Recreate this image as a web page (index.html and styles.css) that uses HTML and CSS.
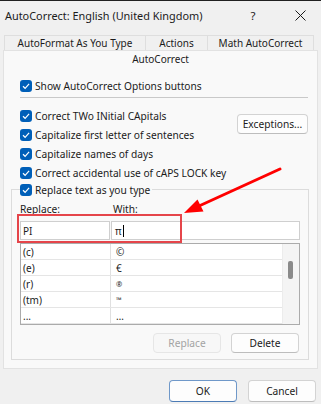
FILE: index.html
```html
<!DOCTYPE html>
<html>
<head>
<meta charset="utf-8">
<title>AutoCorrect</title>
<link rel="stylesheet" href="styles.css">
</head>
<body>
<div class="window">
  <div class="titlebar">
    <span class="title">AutoCorrect: English (United Kingdom)</span>
    <span class="help">?</span>
    <span class="close"><svg width="11" height="11" viewBox="0 0 11 11"><path d="M0.5 0.5L10.5 10.5M10.5 0.5L0.5 10.5" stroke="#1a1a1a" stroke-width="1" fill="none"/></svg></span>
  </div>
  <div class="tabs">
    <div class="tab t1">AutoFormat As You Type</div>
    <div class="tab t2">Actions</div>
    <div class="tab t3">Math AutoCorrect</div>
  </div>
  <div class="panel">
    <div class="panel-title">AutoCorrect</div>
    <div class="check show"><span class="box"><svg width="12" height="12" viewBox="0 0 12 12"><path d="M3 6.3L5.1 8.3L9.1 3.9" stroke="#fff" stroke-width="1.2" fill="none"/></svg></span>Show AutoCorrect Options buttons</div>
    <div class="sep"></div>
    <div class="opts">
      <div class="opt-list">
        <div class="check"><span class="box"><svg width="12" height="12" viewBox="0 0 12 12"><path d="M3 6.3L5.1 8.3L9.1 3.9" stroke="#fff" stroke-width="1.2" fill="none"/></svg></span>Correct TWo INitial CApitals</div>
        <div class="check"><span class="box"><svg width="12" height="12" viewBox="0 0 12 12"><path d="M3 6.3L5.1 8.3L9.1 3.9" stroke="#fff" stroke-width="1.2" fill="none"/></svg></span>Capitalize first letter of sentences</div>
        <div class="check"><span class="box"><svg width="12" height="12" viewBox="0 0 12 12"><path d="M3 6.3L5.1 8.3L9.1 3.9" stroke="#fff" stroke-width="1.2" fill="none"/></svg></span>Capitalize names of days</div>
        <div class="check"><span class="box"><svg width="12" height="12" viewBox="0 0 12 12"><path d="M3 6.3L5.1 8.3L9.1 3.9" stroke="#fff" stroke-width="1.2" fill="none"/></svg></span>Correct accidental use of cAPS LOCK key</div>
      </div>
      <div class="btn exceptions">Exceptions...</div>
    </div>
    <fieldset class="group">
      <legend class="legend"><div class="check leg"><span class="box"><svg width="12" height="12" viewBox="0 0 12 12"><path d="M3 6.3L5.1 8.3L9.1 3.9" stroke="#fff" stroke-width="1.2" fill="none"/></svg></span>Replace text as you type</div></legend>
      <div class="labels"><span class="lab-replace">Replace:</span><span>With:</span></div>
      <div class="inputs">
        <div class="input in-replace">PI</div>
        <div class="input in-with">π<span class="caret"></span></div>
      </div>
      <div class="list">
        <div class="rows">
          <div class="row"><span class="k">(c)</span><span class="v">©</span></div>
          <div class="row"><span class="k">(e)</span><span class="v">€</span></div>
          <div class="row"><span class="k">(r)</span><span class="v sm">®</span></div>
          <div class="row"><span class="k">(tm)</span><span class="v sm">™</span></div>
          <div class="row"><span class="k">...</span><span class="v">…</span></div>
        </div>
        <div class="scroll"><div class="thumb"></div></div>
      </div>
      <div class="group-btns">
        <div class="btn disabled">Replace</div>
        <div class="btn">Delete</div>
      </div>
    </fieldset>
  </div>
  <div class="footer">
    <div class="btn big ok">OK</div>
    <div class="btn big">Cancel</div>
  </div>
  <div class="highlight"></div>
  <svg class="arrow" width="321" height="404" viewBox="0 0 321 404">
    <line x1="280" y1="169" x2="199" y2="206" stroke="#ff0000" stroke-width="3" stroke-linecap="round"/>
    <polygon points="184,213 203.5,211.5 197.5,199.5" fill="#ff0000"/>
  </svg>
</div>
</body>
</html>
```

FILE: styles.css
```css
* { box-sizing: border-box; }
html, body { margin: 0; padding: 0; }
body {
  background: #f0f0f0;
  font-family: "Noto Sans", "Liberation Sans", sans-serif;
  font-size: 10px;
  color: #1b1b1b;
  width: 321px;
  height: 404px;
  overflow: hidden;
}
.window { position: relative; width: 321px; height: 404px; }

.titlebar {
  height: 30px;
  border-top: 1px solid #202020;
  display: flex;
  align-items: center;
  padding-left: 5px;
}
.title { font-size: 10.9px; flex: 1; white-space: nowrap; }
.help { width: 20px; text-align: center; margin-right: 27px; font-size: 11.5px; }
.close { width: 20px; margin-right: 11px; display: flex; justify-content: center; }

.tabs {
  margin-top: 5px;
  height: 15px;
  display: flex;
  padding-left: 4px;
}
.tab {
  border: 1px solid #dedede;
  border-bottom: none;
  text-align: center;
  line-height: 14px;
  font-size: 10px;
  white-space: nowrap;
}
.t1 { width: 142px; }
.t2 { width: 63px; margin-left: -1px; }
.t3 { width: 107px; margin-left: -1px; }

.panel {
  margin: 0 3px;
  border: 1px solid #e2e2e2;
  background: #f9f9f9;
  padding-bottom: 8px;
}
.panel-title {
  height: 16px;
  line-height: 16px;
  text-align: center;
  font-size: 10px;
}
.check {
  display: flex;
  align-items: center;
  height: 19px;
  padding-left: 16px;
  white-space: nowrap;
  font-size: 10.2px;
}
.box {
  width: 12px;
  height: 12px;
  border-radius: 3px;
  background: #005fb8;
  margin-right: 3px;
  display: flex;
  flex-shrink: 0;
}
.show { margin-top: 9px; }
.sep {
  height: 1px;
  background: #c9c9c9;
  margin: 2px 9px 0 16px;
}
.opts {
  margin-top: 8px;
  display: flex;
  align-items: flex-start;
}
.opt-list { flex: 1; }
.btn {
  display: flex;
  align-items: center;
  justify-content: center;
  height: 20px;
  background: #fdfdfd;
  border: 1px solid #d3d3d3;
  border-bottom-color: #bdbdbd;
  border-radius: 4px;
  font-size: 10.2px;
  white-space: nowrap;
}
.exceptions {
  width: 71px;
  margin-top: 8px;
  margin-right: 9px;
}

.group {
  margin: -2px 8px 0 7px;
  border: 1px solid #dcdcdc;
  padding: 0 8px 6px 8px;
  min-width: 0;
}
.legend { padding: 0 2px 0 0; margin: 0; }
.leg { padding-left: 0; }

.labels {
  margin-top: 3px;
  height: 15px;
  line-height: 15px;
  display: flex;
  font-size: 10.2px;
}
.lab-replace { width: 93px; }

.inputs {
  margin-top: 4px;
  display: flex;
  height: 19px;
}
.input {
  background: #fff;
  border: 1px solid #cfcfcf;
  display: flex;
  align-items: center;
  padding-left: 2px;
  font-size: 10px;
}
.in-replace { width: 90px; }
.in-with { width: 189px; margin-left: 1px; padding-left: 3px; }
.caret { width: 1px; height: 12px; background: #000; margin-left: 1px; }

.list {
  margin-top: 3px;
  height: 82px;
  border: 1px solid #ababab;
  display: flex;
  background: #fff;
}
.rows { flex: 1; }
.row {
  height: 16px;
  border-bottom: 1px solid #e5e5e5;
  display: flex;
  align-items: center;
  font-size: 10px;
}
.k {
  width: 90px;
  height: 100%;
  border-right: 1px solid #e0e0e0;
  padding-left: 2px;
  display: flex;
  align-items: center;
}
.v { padding-left: 5px; }
.v.sm { font-size: 7.5px; }
.scroll {
  width: 17px;
  background: #f4f4f4;
  border-left: 1px solid #ececec;
}
.thumb {
  width: 5px;
  height: 18px;
  margin: 17px 0 0 5px;
  background: #8a8a8a;
  border-radius: 2px;
}

.group-btns {
  margin-top: 8px;
  display: flex;
  justify-content: flex-end;
  gap: 10px;
  padding-right: 1px;
}
.group-btns .btn { width: 68px; }
.disabled {
  color: #a3a3a3;
  background: #f7f7f7;
  border-color: #e6e6e6;
}

.footer {
  margin-top: 11px;
  display: flex;
  justify-content: flex-end;
  gap: 11px;
  padding-right: 5px;
}
.big { height: 22px; width: 68px; }
.ok { border-color: #6f98c9; border-bottom-color: #4c7bb5; }

.highlight {
  position: absolute;
  left: 17px;
  top: 214px;
  width: 165px;
  height: 29px;
  border: 2px solid #e5454a;
}
.arrow {
  position: absolute;
  left: 0;
  top: 0;
  pointer-events: none;
}
```
